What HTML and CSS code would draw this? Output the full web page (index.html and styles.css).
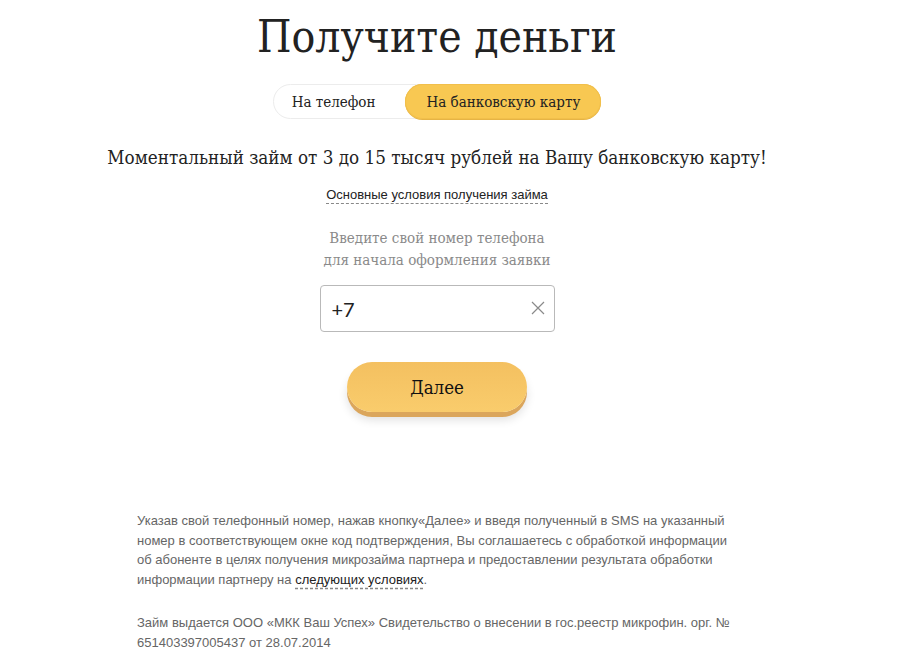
FILE: index.html
```html
<!DOCTYPE html>
<html lang="ru">
<head>
	<meta charset="UTF-8">
	<title>Получите деньги</title>
	<link rel="stylesheet" href="styles.css">
</head>
<body>

	<div class="page">

		<h1 class="title">Получите деньги</h1>

		<div class="switch">
			<div class="switch-item">На телефон</div>
			<div class="switch-item active">На банковскую карту</div>
		</div>

		<p class="lead">Моментальный займ от 3 до 15 тысяч рублей на Вашу банковскую карту!</p>

		<a class="terms" href="#">Основные условия получения займа</a>

		<p class="hint">Введите свой номер телефона<br>для начала оформления заявки</p>

		<div class="field">
			<input class="phone" type="text" value="+7">
			<span class="clear">
				<svg width="14" height="14" viewBox="0 0 14 14"><path d="M1 1L13 13M13 1L1 13" stroke="#8a8a8a" stroke-width="1.2" fill="none"/></svg>
			</span>
		</div>

		<button class="next">Далее</button>

		<div class="notes">
			<p>Указав свой телефонный номер, нажав кнопку«Далее» и введя полученный в SMS на указанный номер в соответствующем окне код подтверждения, Вы соглашаетесь с обработкой информации об абоненте в целях получения микрозайма партнера и предоставлении результата обработки информации партнеру на <a href="#">следующих условиях</a>.</p>
			<p>Займ выдается ООО «МКК Ваш Успех» Свидетельство о внесении в гос.реестр микрофин. орг. № 651403397005437 от 28.07.2014</p>
		</div>

	</div>

</body>
</html>
```

FILE: styles.css
```css
* {
	margin: 0;
	padding: 0;
	box-sizing: border-box;
}

body {
	background: #fff;
	font-family: "DejaVu Serif Condensed", "DejaVu Serif", serif;
	color: #222;
}

.page {
	width: 874px;
	display: flex;
	flex-direction: column;
	align-items: center;
	padding-top: 9px;
}

.title {
	font-weight: normal;
	font-size: 44px;
	line-height: 56px;
	color: #222;
}

.switch {
	display: flex;
	margin-top: 19px;
	border: 1px solid #ececec;
	border-radius: 18px;
	height: 35px;
}

.switch-item {
	display: flex;
	align-items: center;
	padding: 0 18px;
	font-size: 15px;
	color: #222;
	border-radius: 18px;
}

.switch-item:first-child {
	padding: 0 30px 0 18px;
}

.switch-item.active {
	background: #f8c852;
	box-shadow: 0 1px 0 #e6b445, inset 0 0 0 1px #f1bf4b;
	margin: -1px -1px -1px 0;
	padding: 0 21px;
}

.lead {
	margin-top: 26px;
	font-size: 18.7px;
	line-height: 26px;
	color: #222;
}

.terms {
	margin-top: 16px;
	font-family: "Liberation Sans", Arial, sans-serif;
	font-size: 13px;
	color: #222;
	text-decoration: none;
	border-bottom: 1px dashed #888;
	line-height: 16px;
}

.hint {
	margin-top: 23px;
	text-align: center;
	font-size: 15px;
	line-height: 22px;
	color: #8a8a8a;
}

.field {
	position: relative;
	margin-top: 14px;
	width: 235px;
	height: 47px;
}

.phone {
	width: 100%;
	height: 100%;
	border: 1px solid #b9b9b9;
	border-radius: 4px;
	padding: 0 40px 0 11px;
	font-family: "Lato", "Open Sans", sans-serif;
	font-size: 20px;
	color: #222;
	outline: none;
}

.clear {
	position: absolute;
	right: 10px;
	top: 16px;
	line-height: 0;
}

.next {
	margin-top: 30px;
	width: 180px;
	height: 50px;
	border: none;
	border-radius: 25px;
	background: linear-gradient(#f4c060, #f9cc6c);
	box-shadow: 0 5px 0 #dba65c, 0 8px 10px rgba(0, 0, 0, 0.12);
	font-family: "DejaVu Serif Condensed", "DejaVu Serif", serif;
	font-size: 18.5px;
	color: #111;
	cursor: pointer;
}

.notes {
	width: 600px;
	margin-top: 99px;
	font-family: "Liberation Sans", Arial, sans-serif;
	font-size: 13px;
	line-height: 19.5px;
	color: #666;
}

.notes p + p {
	margin-top: 24px;
}

.notes a {
	color: #222;
	text-decoration: underline dashed #888;
	text-underline-offset: 4px;
}
```
